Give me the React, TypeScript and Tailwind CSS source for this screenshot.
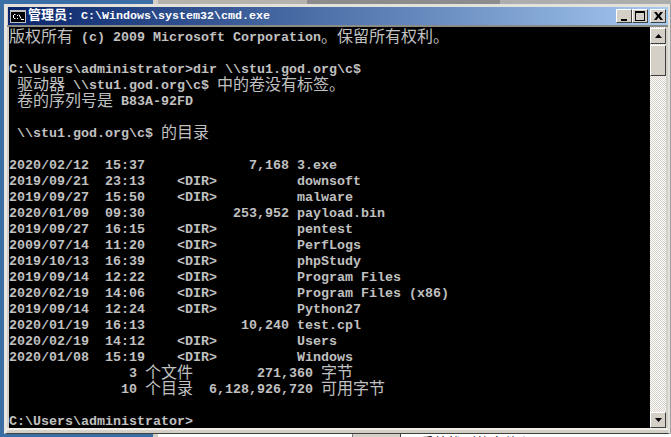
const LINES = [
  '版权所有 (c) 2009 Microsoft Corporation。保留所有权利。',
  '',
  'C:\\Users\\administrator>dir \\\\stu1.god.org\\c$',
  ' 驱动器 \\\\stu1.god.org\\c$ 中的卷没有标签。',
  ' 卷的序列号是 B83A-92FD',
  '',
  ' \\\\stu1.god.org\\c$ 的目录',
  '',
  '2020/02/12  15:37             7,168 3.exe',
  '2019/09/21  23:13    <DIR>          downsoft',
  '2019/09/27  15:50    <DIR>          malware',
  '2020/01/09  09:30           253,952 payload.bin',
  '2019/09/27  16:15    <DIR>          pentest',
  '2009/07/14  11:20    <DIR>          PerfLogs',
  '2019/10/13  16:39    <DIR>          phpStudy',
  '2019/09/14  12:22    <DIR>          Program Files',
  '2020/02/19  14:06    <DIR>          Program Files (x86)',
  '2019/09/14  12:24    <DIR>          Python27',
  '2020/01/19  16:13            10,240 test.cpl',
  '2020/02/19  14:12    <DIR>          Users',
  '2020/01/08  15:19    <DIR>          Windows',
  '               3 个文件        271,360 字节',
  '              10 个目录  6,128,926,720 可用字节',
  '',
  'C:\\Users\\administrator>',
];

// cjk glyphs take two cells, so they get their own span at 16px
function ConsoleLine({ text }: { text: string }) {
  const parts = text.split(/([\u3000-\u303f\u4e00-\u9fff]+)/);
  return (
    <div className="h-4 leading-[20px] whitespace-pre">
      {parts.map((p, i) =>
        i % 2 === 1 ? (
          <span key={i} className="relative top-[1px] font-['Noto_Sans_CJK_SC',sans-serif] text-[16px] leading-[0] font-normal">
            {p}
          </span>
        ) : (
          <span key={i}>{p}</span>
        )
      )}
    </div>
  );
}

function CaptionButton({ children, className = '' }: { children: React.ReactNode; className?: string }) {
  return (
    <div
      className={`w-4 bg-[#d4d0c8] border border-t-white border-l-white border-r-[#404040] border-b-[#404040] flex items-center justify-center ${className}`}
    >
      {children}
    </div>
  );
}

export default function App() {
  return (
    <div className="w-[671px] h-[437px] overflow-hidden flex flex-col bg-[#3a6ea5]">
      {/* whatever is behind the window, top edge */}
      <div className="h-1 flex shrink-0">
        <div className="w-[153px] bg-[#3a6ea5]" />
        <div className="w-[5px] bg-[#d4d0c8]" />
        <div className="w-[149px] bg-[#b5b3ab]" />
        <div className="flex-1 bg-[#8c8c8c]" />
        <div className="w-[171px] bg-[#adadad]" />
      </div>

      <div className="flex shrink-0">
        <div className="w-1 shrink-0" />
        {/* cmd window */}
        <div className="w-[666px] h-[430px] shrink-0 bg-[#d4d0c8] border-t-[3px] border-l-[3px] border-r-[2px] border-b-[1px] border-t-[#e4e1da] border-l-[#e8e6e0] border-r-[#e4e1da] border-b-[#404040] flex flex-col">
          <div className="h-[18px] ml-[1px] shrink-0 flex items-center bg-linear-to-r from-[#0a246a] to-[#a6caf0] pl-[2px] pr-[2px]">
            <svg width="16" height="13" viewBox="0 0 16 13" className="shrink-0">
              <rect x="0" y="0" width="16" height="13" fill="#c0c0c0" />
              <rect x="1" y="2" width="14" height="10" fill="#000" />
              <path d="M3.500 5v3M4 4.500h1.500M4 8.500h1.500M7.500 5v1M7.500 8v1M9 4.500l2 4M11 9.500h3" stroke="#fff" strokeWidth="1" fill="none" />
            </svg>
            <div className="ml-[2px] flex-1 whitespace-pre text-white font-bold leading-[18px] font-['Liberation_Mono',monospace] text-[11.67px]">
              <span className="font-['Noto_Sans_CJK_SC',sans-serif] text-[13px] leading-[0]">管理员</span>:{' '}
              C:\Windows\system32\cmd.exe
            </div>
            <div className="flex items-center">
              <CaptionButton className="h-[14px]">
                <div className="w-[6px] h-[2px] bg-black mt-[7px] -ml-[1px]" />
              </CaptionButton>
              <CaptionButton className="h-[14px]">
                <div className="w-[10px] h-[10px] border border-t-2 border-black" />
              </CaptionButton>
              <CaptionButton className="h-[14px] ml-[2px]">
                <svg width="9" height="8" viewBox="0 0 9 8">
                  <path d="M0 0h2.500L4.500 2.500 6.500 0H9L6 4l3 4H6.500L4.500 5.500 2.500 8H0l3-4z" fill="#000" />
                </svg>
              </CaptionButton>
            </div>
          </div>

          <div className="flex h-[403px] shrink-0 border-t-2 border-[#8a8a86] pl-[2px]">
            <div className="w-[641px] pt-[1px] bg-black text-[#c0c0c0] font-['Liberation_Mono',monospace] font-bold text-[13.33px] overflow-hidden">
              {LINES.map((line, i) => (
                <ConsoleLine key={i} text={line} />
              ))}
            </div>
            <div className="w-4 pt-[1px] flex flex-col bg-[repeating-conic-gradient(#d4d0c8_0_25%,#ffffff_0_50%)] bg-size-[2px_2px]">
              <CaptionButton className="h-4">
                <svg width="7" height="4" viewBox="0 0 7 4"><path d="M3.500 0L7 4H0z" fill="#000" /></svg>
              </CaptionButton>
              <div className="w-4 h-[31px] mt-[1px] bg-[#d4d0c8] border border-t-white border-l-white border-r-[#404040] border-b-[#404040]" />
              <div className="flex-1" />
              <CaptionButton className="h-4">
                <svg width="7" height="4" viewBox="0 0 7 4"><path d="M0 0h7L3.500 4z" fill="#000" /></svg>
              </CaptionButton>
            </div>
          </div>
          <div className="flex-1 border-t-2 border-[#f0eee9]" />
        </div>
        <div className="flex-1 bg-[#a0a0a0]" />
      </div>

      {/* whatever is behind the window, bottom edge */}
      <div className="h-[3px] flex shrink-0 bg-white overflow-hidden">
        <div className="w-[153px] bg-[#3a6ea5]" />
        <div className="w-[5px] bg-[#d4d0c8]" />
        <div className="w-[194px] bg-white" />
        <div className="w-[48px] bg-[#d4d0c8] border-l border-[#808080]" />
        <div className="w-[20px] bg-white border-l border-[#404040]" />
        <div className="text-[14px] leading-[16px] font-['Noto_Sans_CJK_SC',sans-serif] text-black whitespace-pre">
          系统找到的文件和目录
        </div>
      </div>
    </div>
  );
}
